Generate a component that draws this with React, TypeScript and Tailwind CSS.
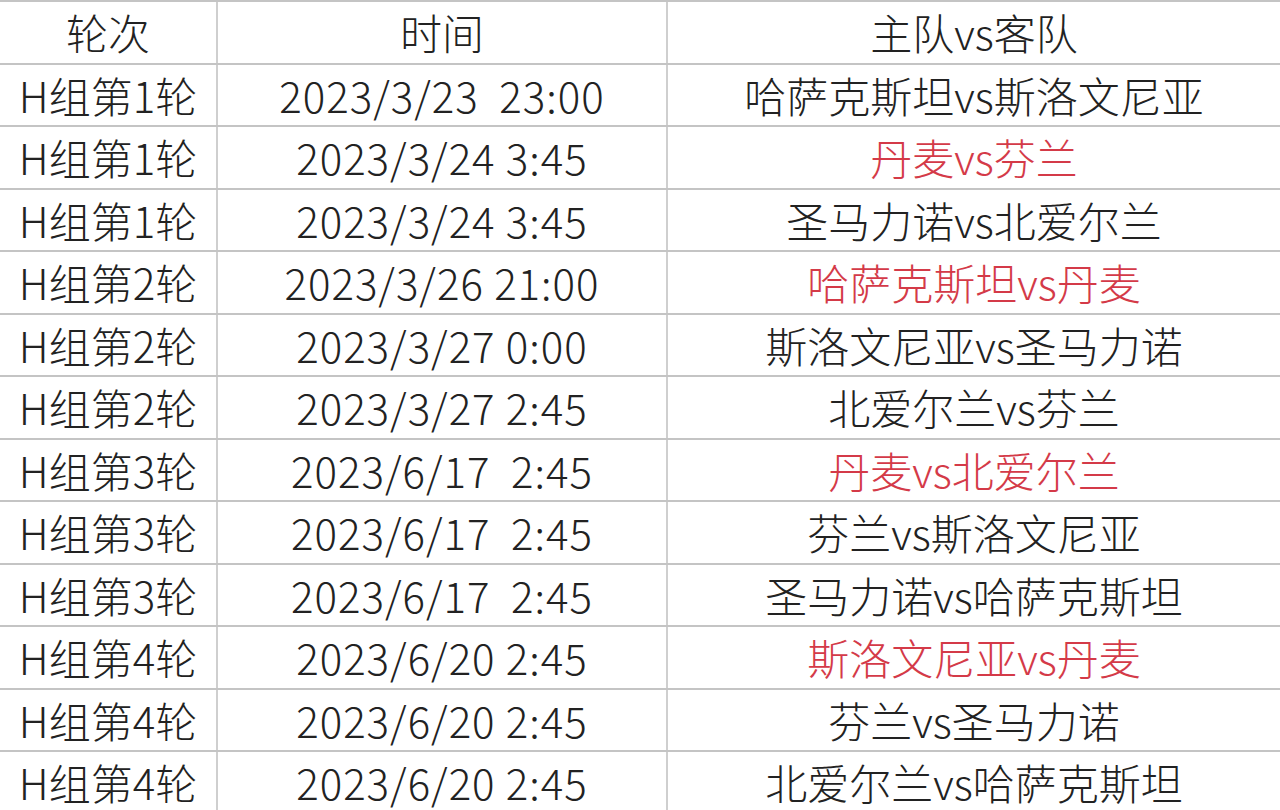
import * as React from "react";

type Match = {
  round: string;
  time: string;
  teams: string;
  hot?: boolean;
};

const matches: Match[] = [
  { round: "H组第1轮", time: "2023/3/23  23:00", teams: "哈萨克斯坦vs斯洛文尼亚" },
  { round: "H组第1轮", time: "2023/3/24 3:45", teams: "丹麦vs芬兰", hot: true },
  { round: "H组第1轮", time: "2023/3/24 3:45", teams: "圣马力诺vs北爱尔兰" },
  { round: "H组第2轮", time: "2023/3/26 21:00", teams: "哈萨克斯坦vs丹麦", hot: true },
  { round: "H组第2轮", time: "2023/3/27 0:00", teams: "斯洛文尼亚vs圣马力诺" },
  { round: "H组第2轮", time: "2023/3/27 2:45", teams: "北爱尔兰vs芬兰" },
  { round: "H组第3轮", time: "2023/6/17  2:45", teams: "丹麦vs北爱尔兰", hot: true },
  { round: "H组第3轮", time: "2023/6/17  2:45", teams: "芬兰vs斯洛文尼亚" },
  { round: "H组第3轮", time: "2023/6/17  2:45", teams: "圣马力诺vs哈萨克斯坦" },
  { round: "H组第4轮", time: "2023/6/20 2:45", teams: "斯洛文尼亚vs丹麦", hot: true },
  { round: "H组第4轮", time: "2023/6/20 2:45", teams: "芬兰vs圣马力诺" },
  { round: "H组第4轮", time: "2023/6/20 2:45", teams: "北爱尔兰vs哈萨克斯坦" },
];

function Row({ a, b, c, red, head }: { a: string; b: string; c: string; red?: boolean; head?: boolean }) {
  return (
    <div className="grid grid-cols-[218px_450px_1fr] h-[62.5px] border-b-2 border-[#c4c4c4]">
      <div className="flex items-center justify-center border-r-2 border-[#cfcfcf]">{a}</div>
      <div
        className={
          head
            ? "flex items-center justify-center border-r-2 border-[#cfcfcf]"
            : "flex items-center justify-center border-r-2 border-[#cfcfcf] tracking-[1px] whitespace-pre"
        }
      >
        {b}
      </div>
      <div className={red ? "flex items-center justify-center text-[#d43a48]" : "flex items-center justify-center"}>
        {c}
      </div>
    </div>
  );
}

export default function App() {
  return (
    <div
      className="w-[1280px] h-[810px] overflow-hidden bg-white text-[#222] text-[42px] font-light leading-none"
      style={{ fontFamily: '"Noto Sans CJK SC", "Noto Sans", sans-serif' }}
    >
      <div className="border-t-2 border-[#c4c4c4]">
        <Row a="轮次" b="时间" c="主队vs客队" head />
        {matches.map((m, i) => (
          <Row key={i} a={m.round} b={m.time} c={m.teams} red={m.hot} />
        ))}
      </div>
    </div>
  );
}
